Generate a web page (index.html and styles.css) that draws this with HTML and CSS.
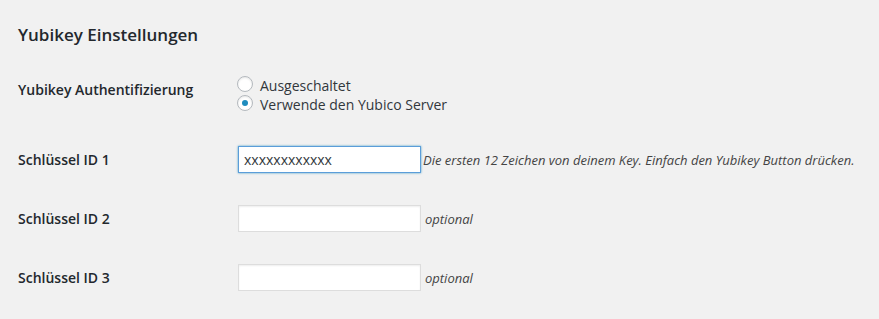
FILE: index.html
```html
<!DOCTYPE html>
<html lang="de">
<head>
<meta charset="utf-8">
<title>Yubikey Einstellungen</title>
<link rel="stylesheet" href="styles.css">
</head>
<body>
<div class="wrap">
  <h2 class="title">Yubikey Einstellungen</h2>
  <div class="form">
    <div class="row row-first">
      <div class="th">Yubikey Authentifizierung</div>
      <div class="td radios">
        <label class="opt"><span class="radio"></span><span class="opt-text">Ausgeschaltet</span></label>
        <label class="opt"><span class="radio checked"></span><span class="opt-text">Verwende den Yubico Server</span></label>
      </div>
    </div>
    <div class="row">
      <div class="th">Schlüssel ID 1</div>
      <div class="td field">
        <input class="text focus" type="text" value="xxxxxxxxxxxx">
        <span class="description tight">Die ersten 12 Zeichen von deinem Key. Einfach den Yubikey Button drücken.</span>
      </div>
    </div>
    <div class="row">
      <div class="th">Schlüssel ID 2</div>
      <div class="td field">
        <input class="text" type="text" value="">
        <span class="description">optional</span>
      </div>
    </div>
    <div class="row">
      <div class="th">Schlüssel ID 3</div>
      <div class="td field">
        <input class="text" type="text" value="">
        <span class="description">optional</span>
      </div>
    </div>
  </div>
</div>
</body>
</html>
```

FILE: styles.css
```css
html, body {
  margin: 0;
  padding: 0;
  background: #f1f1f1;
}

body {
  font-family: "Open Sans", "Liberation Sans", sans-serif;
  color: #444;
  font-size: 14px;
  line-height: 19px;
}

.wrap {
  padding: 0 0 0 18px;
}

.title {
  margin: 23px 0 0;
  font-size: 17px;
  line-height: 24px;
  font-weight: 600;
  color: #23282d;
}

.row {
  display: grid;
  grid-template-columns: 220px 1fr;
  margin-top: 32px;
}

.row-first {
  margin-top: 29px;
}

.th {
  padding-top: 4px;
  font-weight: 600;
  color: #23282d;
  font-size: 14px;
  line-height: 19px;
}

.radios {
  display: flex;
  flex-direction: column;
}

.opt {
  display: flex;
  align-items: flex-start;
  height: 19px;
}

.radio {
  box-sizing: border-box;
  width: 16px;
  height: 16px;
  margin-left: -1px;
  border: 1px solid #b4b9be;
  border-radius: 50%;
  background: #fff;
  box-shadow: inset 0 1px 2px rgba(0, 0, 0, 0.1);
  display: flex;
  align-items: center;
  justify-content: center;
}

.radio.checked::before {
  content: "";
  width: 6px;
  height: 6px;
  border-radius: 50%;
  background: #1e8cbe;
}

.opt-text {
  margin-left: 7px;
  color: #32373c;
}

.field {
  display: flex;
  align-items: baseline;
}

.text {
  box-sizing: border-box;
  width: 183px;
  height: 27px;
  margin: 0;
  padding: 3px 5px;
  border: 1px solid #ddd;
  background: #fff;
  box-shadow: inset 0 1px 2px rgba(0, 0, 0, 0.07);
  font-family: "Open Sans", "Liberation Sans", sans-serif;
  font-size: 14px;
  line-height: 19px;
  color: #32373c;
  outline: none;
  border-radius: 0;
}

.text.focus {
  border-color: #5b9dd9;
  box-shadow: 0 0 2px rgba(30, 140, 190, 0.8);
}

.description {
  margin-left: 4px;
  font-size: 13px;
  font-style: italic;
  color: #444;
}

.description.tight {
  margin-left: 2px;
}
```
